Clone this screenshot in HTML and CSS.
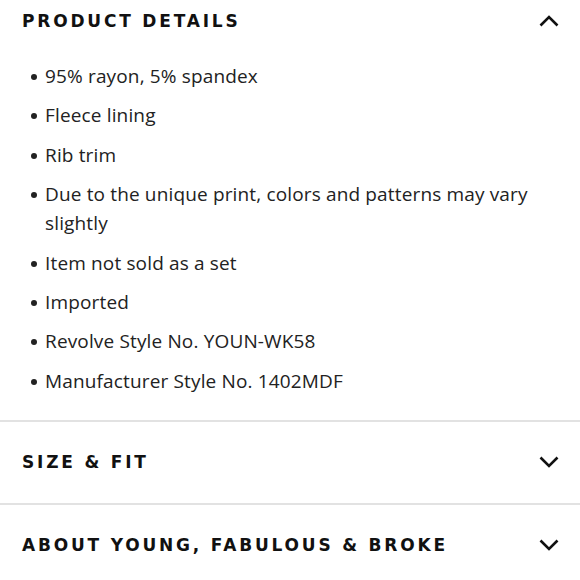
FILE: index.html
```html
<!DOCTYPE html>
<html lang="en">
<head>
<meta charset="utf-8">
<link rel="stylesheet" href="styles.css">
</head>
<body>
<div class="accordion">
  <section class="panel">
    <div class="panel-head">
      <h2 class="panel-title">PRODUCT DETAILS</h2>
      <svg class="chev" width="20" height="12" viewBox="0 0 20 12"><polyline points="1.5,10.5 10,2 18.5,10.5" fill="none" stroke="#111" stroke-width="2.6"/></svg>
    </div>
    <ul class="details">
      <li>95% rayon, 5% spandex</li>
      <li>Fleece lining</li>
      <li>Rib trim</li>
      <li>Due to the unique print, colors and patterns may vary slightly</li>
      <li>Item not sold as a set</li>
      <li>Imported</li>
      <li>Revolve Style No. YOUN-WK58</li>
      <li>Manufacturer Style No. 1402MDF</li>
    </ul>
  </section>
  <section class="panel">
    <div class="panel-head">
      <h2 class="panel-title">SIZE &amp; FIT</h2>
      <svg class="chev" width="20" height="12" viewBox="0 0 20 12"><polyline points="1.5,1.5 10,10 18.5,1.5" fill="none" stroke="#111" stroke-width="2.6"/></svg>
    </div>
  </section>
  <section class="panel">
    <div class="panel-head">
      <h2 class="panel-title">ABOUT YOUNG, FABULOUS &amp; BROKE</h2>
      <svg class="chev" width="20" height="12" viewBox="0 0 20 12"><polyline points="1.5,1.5 10,10 18.5,1.5" fill="none" stroke="#111" stroke-width="2.6"/></svg>
    </div>
  </section>
</div>
</body>
</html>
```
FILE: styles.css
```css
html, body {
  margin: 0;
  padding: 0;
  background: #fff;
}
body {
  overflow: hidden;
}
.accordion {
  margin-top: -20px;
}
.panel {
  border-top: 2px solid #e2e2e2;
}
.panel:first-child {
  border-top: none;
}
.panel-head {
  height: 81px;
  display: flex;
  align-items: center;
  justify-content: space-between;
  padding: 0 21px 0 22px;
  box-sizing: border-box;
}
.panel-title {
  margin: 0;
  font-family: "DejaVu Sans", sans-serif;
  font-weight: bold;
  font-size: 17px;
  letter-spacing: 2.8px;
  color: #111;
}
.chev {
  display: block;
}
.details {
  margin: 0;
  padding: 1px 40px 24px 45px;
  list-style: none;
  display: flex;
  flex-direction: column;
  gap: 10.4px;
  font-family: "Open Sans", sans-serif;
  font-size: 19px;
  letter-spacing: 0.15px;
  line-height: 29px;
  color: #222;
}
.details li {
  position: relative;
}
.details li::before {
  content: "";
  position: absolute;
  left: -14px;
  top: 12px;
  width: 6px;
  height: 6px;
  border-radius: 50%;
  background: #222;
}
```
